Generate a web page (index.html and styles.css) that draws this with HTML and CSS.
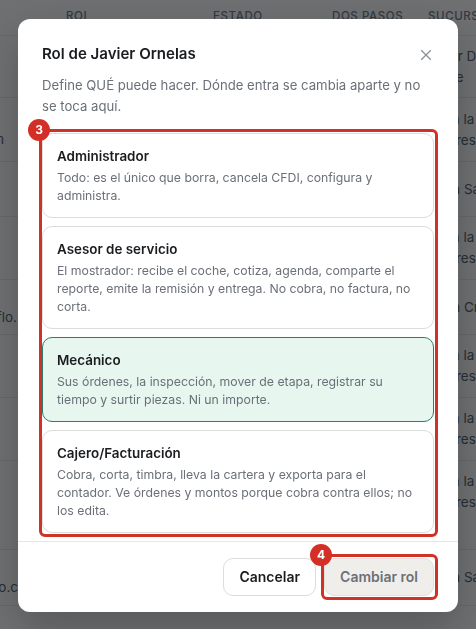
FILE: index.html
```html
<!DOCTYPE html>
<html lang="es">
<head>
<meta charset="utf-8">
<title>Rol de Javier Ornelas</title>
<link rel="stylesheet" href="styles.css">
</head>
<body>
<main class="page">
  <div class="thead">
    <span class="th th-rol">ROL</span>
    <span class="th th-estado">ESTADO</span>
    <span class="th th-pasos">DOS PASOS</span>
    <span class="th th-suc">SUCURSAL</span>
  </div>
  <div class="row h62"><span class="mail"></span><span class="suc">Taller De<br>Norte</span></div>
  <div class="row h64"><span class="mail w4">@taller.com</span><span class="suc">Toda la<br>empresa</span></div>
  <div class="row h55"><span class="mail"></span><span class="suc">Casa Sa</span></div>
  <div class="row h63"><span class="mail"></span><span class="suc">Toda la<br>empresa</span></div>
  <div class="row h55"><span class="mail w17">contacto@flo.</span><span class="suc">Casa Cr</span></div>
  <div class="row h63"><span class="mail"></span><span class="suc">Toda la<br>empresa</span></div>
  <div class="row h63"><span class="mail"></span><span class="suc">Toda la<br>empresa</span></div>
  <div class="row h89 top"><span class="mail"></span><span class="suc">Toda la<br>empresa</span></div>
  <div class="row h56"><span class="mail w18">correo.c</span><span class="suc">Casa Sa</span></div>
</main>

<div class="backdrop"></div>

<section class="modal" role="dialog" aria-labelledby="modal-title">
  <div class="body">
    <header class="head">
      <h2 class="title" id="modal-title">Rol de Javier Ornelas</h2>
      <button class="close" aria-label="Cerrar">
        <svg class="close-icon" viewBox="0 0 12 12" width="12" height="12" aria-hidden="true"><path d="M1.2 1.2 10.8 10.8M10.8 1.2 1.2 10.8"/></svg>
      </button>
    </header>
    <p class="desc">Define QUÉ puede hacer. Dónde entra se cambia aparte y no se toca aquí.</p>

    <div class="roles">
      <span class="callout callout-roles"></span>
      <span class="badge badge-3">3</span>
      <article class="card">
        <h3 class="card-title">Administrador</h3>
        <p class="card-text">Todo: es el único que borra, cancela CFDI, configura y administra.</p>
      </article>
      <article class="card">
        <h3 class="card-title">Asesor de servicio</h3>
        <p class="card-text">El mostrador: recibe el coche, cotiza, agenda, comparte el reporte, emite la remisión y entrega. No cobra, no factura, no corta.</p>
      </article>
      <article class="card card-active">
        <h3 class="card-title">Mecánico</h3>
        <p class="card-text">Sus órdenes, la inspección, mover de etapa, registrar su tiempo y surtir piezas. Ni un importe.</p>
      </article>
      <article class="card">
        <h3 class="card-title">Cajero/Facturación</h3>
        <p class="card-text">Cobra, corta, timbra, lleva la cartera y exporta para el contador. Ve órdenes y montos porque cobra contra ellos; no los edita.</p>
      </article>
    </div>
  </div>

  <footer class="foot">
    <button class="btn">Cancelar</button>
    <div class="submit-wrap">
      <span class="callout callout-submit"></span>
      <span class="badge badge-4">4</span>
      <button class="btn btn-disabled">Cambiar rol</button>
    </div>
  </footer>
</section>
</body>
</html>
```

FILE: styles.css
```css
* { box-sizing: border-box; }
html, body { margin: 0; height: 100%; overflow: hidden; }
body {
  width: 476px;
  height: 629px;
  background: #fafaf9;
  font-family: Inter, "Liberation Sans", sans-serif;
  color: #1a1c1f;
}
.page { height: 629px; overflow: hidden; }
.thead { height: 36px; position: relative; border-bottom: 1px solid #e7e6e3; }
.th {
  position: absolute;
  top: 9px;
  font-size: 11.5px;
  line-height: 14px;
  letter-spacing: .6px;
  font-weight: 500;
  color: #6b7280;
  white-space: nowrap;
}
.th-rol { left: 66px; }
.th-estado { left: 213px; }
.th-pasos { left: 332px; }
.th-suc { left: 428px; }

.row {
  display: flex;
  justify-content: space-between;
  align-items: center;
  border-bottom: 1px solid #e7e6e3;
  font-size: 13.5px;
  line-height: 21px;
  color: #4b5563;
}
.row.top { align-items: flex-start; padding-top: 10px; }
.h55 { height: 55px; }
.h56 { height: 56px; }
.h62 { height: 62px; }
.h63 { height: 63px; }
.h64 { height: 64px; }
.h89 { height: 89px; }
.mail { display: flex; justify-content: flex-end; margin-top: 20px; overflow: hidden; white-space: nowrap; }
.w4 { width: 4px; }
.w17 { width: 17px; }
.w18 { width: 18px; }
.suc { width: 48px; white-space: nowrap; overflow: hidden; }

.backdrop {
  position: fixed;
  inset: 0;
  background: rgba(17, 20, 24, .6);
}

.modal {
  position: fixed;
  left: 18px;
  top: 19px;
  width: 440px;
  height: 593px;
  display: flex;
  flex-direction: column;
  background: #fff;
  border-radius: 12px;
  box-shadow: 0 16px 40px rgba(0, 0, 0, .22);
}
.body { flex: 1; padding: 24px 24px 0; }
.head { display: flex; justify-content: space-between; align-items: center; height: 22px; }
.title { margin: 0; font-size: 15.05px; line-height: 22px; font-weight: 600; color: #1a1c1f; }
.close { display: flex; padding: 0; margin: 2px 2px 0 0; border: 0; background: none; }
.close-icon { fill: none; stroke: #8b9097; stroke-width: 1.3; }
.desc { margin: 10px 0 0; font-size: 13.15px; line-height: 21px; color: #6b7078; }

.roles { position: relative; margin-top: 16px; display: flex; flex-direction: column; gap: 8px; }
.card {
  padding: 13px 14px 12px;
  border: 1px solid #dcdcda;
  border-radius: 10px;
  background: #fff;
}
.card-active { background: #e7f6ef; border-color: #2f7d68; }
.card-title { margin: 0 0 4px; font-size: 13.4px; line-height: 18px; font-weight: 600; color: #1a1c1f; }
.card-text { margin: 0; font-size: 12.27px; line-height: 18px; color: #6b7078; }

.foot {
  display: flex;
  justify-content: flex-end;
  gap: 8px;
  padding: 16px 24px;
  border-top: 1px solid #e7e6e3;
}
.btn {
  height: 38px;
  padding: 0 15px;
  border: 1px solid #dcdcda;
  border-radius: 10px;
  background: #fff;
  font: 600 14px/20px Inter, "Liberation Sans", sans-serif;
  color: #1a1c1f;
}
.btn-disabled { display: block; background: #f0eeea; border-color: #e2dfda; color: #6b7078; }
.submit-wrap { position: relative; }

.callout {
  position: absolute;
  border: 3px solid #cf3328;
  border-radius: 6px;
  pointer-events: none;
}
.callout-roles { inset: -4px -3.5px -4px -3.5px; }
.callout-submit { inset: -4px -3.5px -4px -3.5px; }
.badge {
  position: absolute;
  width: 22px;
  height: 22px;
  border-radius: 50%;
  background: #d42f26;
  color: #fff;
  display: flex;
  align-items: center;
  justify-content: center;
  font-size: 12px;
  font-weight: 700;
  line-height: 1;
}
.badge-3 { left: -14px; top: -14px; }
.badge-4 { left: -14px; top: -14px; }
```
